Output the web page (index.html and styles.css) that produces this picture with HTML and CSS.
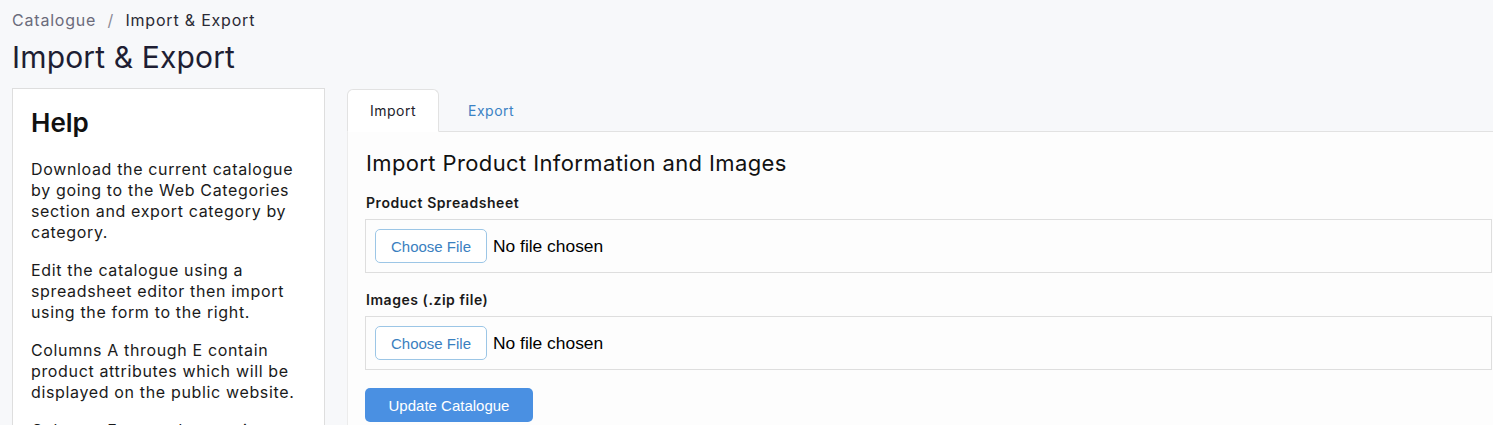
FILE: index.html
```html
<!DOCTYPE html>
<html lang="en">
<head>
  <meta charset="UTF-8">
  <meta name="viewport" content="width=device-width, initial-scale=1.0">
  <title>Import &amp; Export</title>
  <link rel="stylesheet" href="styles.css">
</head>

<body>
  <div class="page">
    <!-- Breadcrumb + title -->
    <div class="breadcrumb">
      <a href="#">Catalogue</a>
      <span class="sep">/</span>
      <span class="current">Import &amp; Export</span>
    </div>
    <h1 class="page-title">Import &amp; Export</h1>

    <div class="layout">
      <!-- Help section -->
      <div class="help-card">
        <h2>Help</h2>
        <p>Download the current catalogue by going to the Web Categories section and export category by category.</p>
        <p>Edit the catalogue using a spreadsheet editor then import using the form to the right.</p>
        <p>Columns A through E contain product attributes which will be displayed on the public website.</p>
        <p>Columns F onwards contain internal information used for stock control.</p>
      </div>

      <!-- Tabs section -->
      <div class="tabs-area">
        <ul class="tabs">
          <li class="tab active"><a href="#">Import</a></li>
          <li class="tab"><a href="#">Export</a></li>
        </ul>
        <div class="tab-panel">
          <h3>Import Product Information and Images</h3>
          <form class="import-form">
            <label for="sheet">Product Spreadsheet</label>
            <div class="file-box">
              <input type="file" id="sheet">
            </div>
            <label for="images">Images (.zip file)</label>
            <div class="file-box">
              <input type="file" id="images">
            </div>
            <button type="button" class="btn-primary">Update Catalogue</button>
          </form>
        </div>
      </div>
    </div>
  </div>
</body>

</html>
```

FILE: styles.css
```css
* {
    box-sizing: border-box;
}
body {
    margin: 0;
    background-color: #f7f8fa;
    font-family: Inter, "Noto Sans", sans-serif;
    color: #1b1b22;
    overflow: hidden;
}
.page {
    width: 1522px;
    padding: 8px 12px;
}
/* breadcrumb + title */
.breadcrumb {
    font-size: 16px;
    line-height: 24px;
    letter-spacing: 0.8px;
}
.breadcrumb a {
    color: #6b6b7b;
    text-decoration: none;
}
.breadcrumb .sep {
    color: #8a8a96;
    margin: 0 6px;
}
.breadcrumb .current {
    color: #2a2a35;
}
.page-title {
    margin: 7px 0 13px;
    font-size: 30px;
    line-height: 36px;
    font-weight: 400;
    letter-spacing: 0.15px;
    color: #1e1e33;
}
.layout {
    display: grid;
    grid-template-columns: 313px 1fr;
    gap: 22px;
}
/* help card */
.help-card {
    background: white;
    border: 1px solid #dedede;
    padding: 18px;
    height: 400px;
}
.help-card h2 {
    margin: 0 0 21px;
    font-size: 26px;
    line-height: 31px;
    font-weight: 600;
    color: #111;
}
.help-card p {
    margin: 0 0 17px;
    font-size: 16px;
    line-height: 21px;
    letter-spacing: 0.65px;
    color: #1a1a1a;
}
/* tabs */
.tabs {
    list-style: none;
    margin: 1px 0 0;
    padding: 0;
    display: flex;
    gap: 6px;
    border-bottom: 1px solid #e2e2e2;
}
.tab a {
    display: block;
    padding: 12px 22px;
    font-size: 14px;
    line-height: 17px;
    letter-spacing: 0.5px;
    color: #3b82c4;
    text-decoration: none;
    border: 1px solid transparent;
    border-radius: 6px 6px 0 0;
    margin-bottom: -1px;
}
.tab.active a {
    color: #22222a;
    background: white;
    border-color: #e2e2e2;
    border-bottom-color: white;
}
.tab-panel {
    background: #fdfdfd;
    border-left: 1px solid #ececec;
    padding: 18px 18px 18px 17px;
    height: 300px;
}
.tab-panel h3 {
    margin: 0 0 18px 1px;
    font-size: 22px;
    line-height: 26px;
    font-weight: 400;
    letter-spacing: 0.38px;
    color: #111;
}
.import-form label {
    display: block;
    margin: 0 0 7px 1px;
    font-size: 14px;
    line-height: 18px;
    font-weight: 600;
    letter-spacing: 0.55px;
    color: #1a1a1a;
}
.file-box {
    border: 1px solid #dedede;
    padding: 9px;
    margin-bottom: 18px;
}
.file-box input {
    font-family: "Liberation Sans", Arial, sans-serif;
    font-size: 17.4px;
    color: #000;
}
.file-box input::file-selector-button {
    font-family: "Liberation Sans", Arial, sans-serif;
    font-size: 15px;
    color: #3a80c0;
    background: white;
    border: 1px solid #9cc6e6;
    border-radius: 5px;
    height: 34px;
    width: 112px;
    margin-right: 6px;
    cursor: pointer;
}
.btn-primary {
    font-family: "Liberation Sans", Arial, sans-serif;
    font-size: 15px;
    color: white;
    background: #4a90e2;
    border: none;
    border-radius: 5px;
    width: 168px;
    height: 34px;
}
```
